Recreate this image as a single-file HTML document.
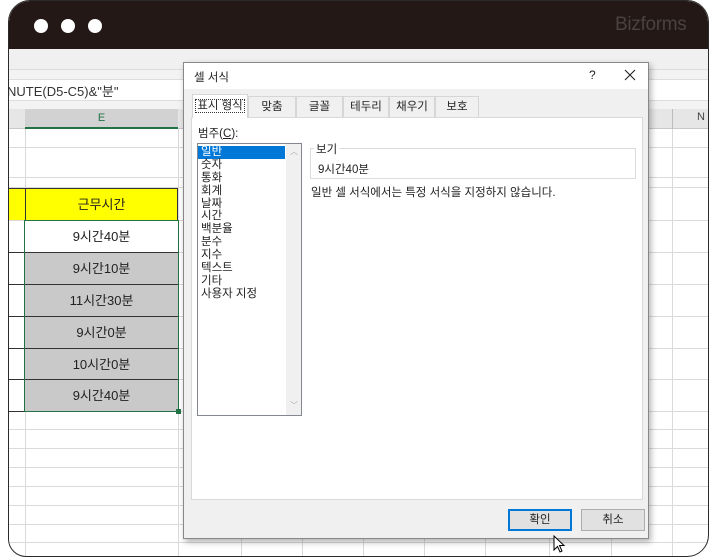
<!DOCTYPE html>
<html><head><meta charset="utf-8"><style>
*{margin:0;padding:0;box-sizing:border-box}
body{width:715px;height:560px;background:#fff;position:relative;overflow:hidden;font-family:"Liberation Sans","Noto Sans CJK KR",sans-serif}
.a{position:absolute}
#frame{left:8px;top:0;width:701px;height:557px;border:1.5px solid #2a2a2a;border-radius:22px 22px 22px 18px;overflow:hidden;background:#fff}
.hl{position:absolute;height:1px;background:#dadada}
.vl{position:absolute;width:1px;background:#dadada}
.cell{position:absolute;left:16px;width:153px;height:32px;border-top:1px solid #333;text-align:center;font-size:13px;line-height:31px;color:#222}
.dlg{left:183px;top:62px;width:466px;height:477px;background:#f0f0f0;border:1px solid #888;box-shadow:2px 3px 6px rgba(0,0,0,.3);font-size:11px;color:#222}
.tab{position:absolute;top:33px;height:21px;border:1px solid #d6d6d6;border-bottom:none;background:#f0f0f0;text-align:center;line-height:20px;font-size:11.5px}
.li{height:12.9px;line-height:12.9px;padding-left:3px;font-size:11.5px}
.btn{position:absolute;top:446px;height:22px;width:64px;border:1px solid #adadad;background:#e1e1e1;text-align:center;line-height:20px;font-size:11.5px}
</style></head><body>
<div id="frame" class="a">
 <div class="a" style="left:0;top:0;width:100%;height:48px;background:#231815"></div>
 <div class="a" style="left:25px;top:18px;width:14px;height:14px;border-radius:50%;background:#fff"></div>
 <div class="a" style="left:52px;top:18px;width:14px;height:14px;border-radius:50%;background:#fff"></div>
 <div class="a" style="left:79px;top:18px;width:14px;height:14px;border-radius:50%;background:#fff"></div>
 <div class="a" style="left:606px;top:13px;font-size:19px;color:#4a4240;letter-spacing:-0.3px">Bizforms</div>
 <div class="a" style="left:0;top:48px;width:100%;height:21px;background:#f0f0f0;border-bottom:1px solid #dcdcdc"></div>
 <div class="a" style="left:0;top:69px;width:100%;height:9px;background:#f3f3f3"></div>
 <div class="a" style="left:0;top:78px;width:100%;height:22px;background:#fff;border-top:1px solid #ddd;border-bottom:1px solid #ddd"></div>
 <div class="a" style="left:-2px;top:80px;font-size:13px;color:#333">NUTE(D5-C5)&amp;"분"</div>
 <div class="a" style="left:0;top:100px;width:100%;height:8px;background:#f3f3f3"></div>
 <div class="a" style="left:0;top:108px;width:100%;height:20px;background:#e6e6e6;border-bottom:1px solid #c8c8c8"></div>
 <div class="a" style="left:16px;top:108px;width:153px;height:20px;background:#d2d2d2;border-bottom:2px solid #217346;text-align:center;font-size:11px;line-height:18px;color:#217346">E</div>
 <div class="a" style="left:663px;top:108px;width:1px;height:20px;background:#bbb"></div>
 <div class="a" style="left:688px;top:110px;font-size:11px;color:#444">N</div>
 <div class="hl" style="left:0;top:146px;width:100%"></div>
 <div class="hl" style="left:0;top:176px;width:100%"></div>
 <div class="hl" style="left:0;top:186px;width:100%"></div>
 <div class="vl" style="left:16px;top:128px;height:430px"></div>
 <div class="vl" style="left:169px;top:128px;height:430px"></div>
 <div class="vl" style="left:232px;top:128px;height:430px"></div>
 <div class="vl" style="left:293px;top:128px;height:430px"></div>
 <div class="vl" style="left:354px;top:128px;height:430px"></div>
 <div class="vl" style="left:415px;top:128px;height:430px"></div>
 <div class="vl" style="left:476px;top:128px;height:430px"></div>
 <div class="vl" style="left:540px;top:128px;height:430px"></div>
 <div class="vl" style="left:602px;top:128px;height:430px"></div>
 <div class="vl" style="left:663px;top:128px;height:430px"></div>
 <div class="hl" style="left:0;top:219px;width:100%"></div>
 <div class="hl" style="left:0;top:251px;width:100%"></div>
 <div class="hl" style="left:0;top:283px;width:100%"></div>
 <div class="hl" style="left:0;top:315px;width:100%"></div>
 <div class="hl" style="left:0;top:347px;width:100%"></div>
 <div class="hl" style="left:0;top:378px;width:100%"></div>
 <div class="hl" style="left:0;top:410px;width:100%"></div>
 <div class="hl" style="left:0;top:428px;width:100%"></div>
 <div class="hl" style="left:0;top:447px;width:100%"></div>
 <div class="hl" style="left:0;top:466px;width:100%"></div>
 <div class="hl" style="left:0;top:485px;width:100%"></div>
 <div class="hl" style="left:0;top:504px;width:100%"></div>
 <div class="hl" style="left:0;top:523px;width:100%"></div>
 <div class="hl" style="left:0;top:541px;width:100%"></div>
 <div class="a" style="left:0;top:187px;width:16px;height:32px;background:#ffff00;border-top:1px solid #333"></div>
 <div class="a" style="left:16px;top:187px;width:153px;height:33px;background:#ffff00;border:1px solid #333;text-align:center;line-height:31px;font-size:13px;color:#222">근무시간</div>
 <div class="a" style="left:0;top:251px;width:16px;height:1px;background:#333"></div>
 <div class="a" style="left:0;top:283px;width:16px;height:1px;background:#333"></div>
 <div class="a" style="left:0;top:315px;width:16px;height:1px;background:#333"></div>
 <div class="a" style="left:0;top:347px;width:16px;height:1px;background:#333"></div>
 <div class="a" style="left:0;top:378px;width:16px;height:1px;background:#333"></div>
 <div class="a" style="left:0;top:410px;width:16px;height:1px;background:#333"></div>
 <div class="cell" style="top:219px;background:#fff">9시간40분</div>
 <div class="cell" style="top:251px;background:#c9c9c9">9시간10분</div>
 <div class="cell" style="top:283px;background:#c9c9c9">11시간30분</div>
 <div class="cell" style="top:315px;background:#c9c9c9">9시간0분</div>
 <div class="cell" style="top:347px;background:#c9c9c9">10시간0분</div>
 <div class="cell" style="top:378px;background:#c9c9c9;height:32px">9시간40분</div>
 <div class="a" style="left:15px;top:219px;width:155px;height:192px;border:1.5px solid #217346"></div>
 <div class="a" style="left:167px;top:408px;width:5px;height:5px;background:#217346"></div>
</div>

<div class="a dlg">
 <div class="a" style="left:0;top:0;width:100%;height:26px;background:#fff"></div>
 <div class="a" style="left:10px;top:6px;font-size:11.5px">셀 서식</div>
 <div class="a" style="left:405px;top:5px;font-size:12px">?</div>
 <svg class="a" style="left:440px;top:6px" width="12" height="12" viewBox="0 0 12 12"><path d="M1 1L11 11M11 1L1 11" stroke="#222" stroke-width="1.1"/></svg>
 <div class="a" style="left:7px;top:54px;width:452px;height:383px;background:#fff;border:1px solid #d9d9d9"></div>
 <div class="tab" style="left:8px;top:31px;height:24px;width:56px;background:#fff;line-height:22px"><span style="border:1px dotted #333;padding:0 1px">표시 형식</span></div>
 <div class="tab" style="left:64px;width:48px">맞춤</div>
 <div class="tab" style="left:112px;width:47px">글꼴</div>
 <div class="tab" style="left:159px;width:46px">테두리</div>
 <div class="tab" style="left:205px;width:46px">채우기</div>
 <div class="tab" style="left:251px;width:44px">보호</div>
 <div class="a" style="left:14px;top:62px;font-size:11.5px">범주(<u>C</u>):</div>
 <div class="a" style="left:13px;top:80px;width:105px;height:273px;background:#fff;border:1px solid #828790">
  <div class="a" style="left:88px;top:0;width:15px;height:271px;background:#f0f0f0"></div>
  <div class="a" style="left:92px;top:2px;font-size:8px;color:#aaa">︿</div>
  <div class="a" style="left:92px;top:256px;font-size:8px;color:#aaa">﹀</div>
  <div style="position:relative;width:87px;padding-top:2px">
   <div class="li" style="background:#0078d7;color:#fff">일반</div>
   <div class="li">숫자</div><div class="li">통화</div><div class="li">회계</div><div class="li">날짜</div><div class="li">시간</div><div class="li">백분율</div><div class="li">분수</div><div class="li">지수</div><div class="li">텍스트</div><div class="li">기타</div><div class="li" style="white-space:nowrap">사용자 지정</div>
  </div>
 </div>
 <div class="a" style="left:126px;top:85px;width:326px;height:31px;border:1px solid #dcdcdc"></div>
 <div class="a" style="left:130px;top:78px;background:#fff;padding:0 2px;font-size:11.5px">보기</div>
 <div class="a" style="left:134px;top:98px;font-size:11.5px">9시간40분</div>
 <div class="a" style="left:127px;top:121px;font-size:11.5px">일반 셀 서식에서는 특정 서식을 지정하지 않습니다.</div>
 <div class="btn" style="left:324px;border:2px solid #0078d7;line-height:18px">확인</div>
 <div class="btn" style="left:397px">취소</div>
</div>
<svg class="a" style="left:553px;top:535px" width="14" height="20" viewBox="0 0 14 20"><path d="M1 1 L1 15 L4.5 11.5 L7 17 L9 16 L6.5 10.5 L11 10.5 Z" fill="#fff" stroke="#000" stroke-width="1"/></svg>
</body></html>
